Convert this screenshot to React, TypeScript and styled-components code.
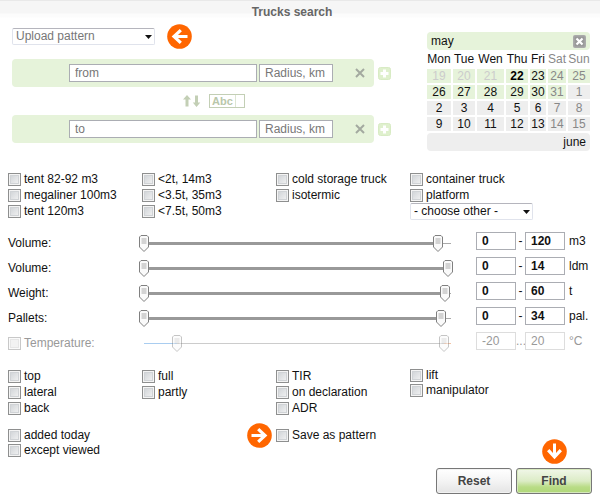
import React, { useState } from "react";
import styled, { createGlobalStyle, css } from "styled-components";

const GlobalStyle = createGlobalStyle`
  *, *::before, *::after { box-sizing: border-box; }
  body {
    margin: 0;
    background: #fff;
    color: #111;
    font: 12px/16px "Liberation Sans", Arial, sans-serif;
  }
  button, input, select { font: inherit; color: inherit; margin: 0; }
`;

const Header = styled.header`
  height: 24px;
  padding-right: 16px;
  border-top: 1px solid #e9e9e9;
  background: linear-gradient(#f6f6f6 12px, #fcfcfc 13px, #fcfcfc 16px, #fff 17px);
`;

const Title = styled.h1`
  margin: 0;
  font-size: 12px;
  line-height: 23px;
  text-align: center;
  color: #666;
`;

const Form = styled.form`
  padding: 0 8px;
`;

const TopArea = styled.div`
  display: flex;
  justify-content: space-between;
  align-items: flex-start;
  padding: 0 2px 0 4px;
`;

const Route = styled.div`
  width: 379px;
`;

const PatternRow = styled.div`
  display: flex;
  align-items: center;
  gap: 12px;
  height: 25px;
  margin-bottom: 10px;
`;

const SelectBox = styled.span<{ $width: number }>`
  position: relative;
  display: inline-flex;
  width: ${(p) => p.$width}px;
`;

const Select = styled.select<{ $muted?: boolean }>`
  appearance: none;
  width: 100%;
  height: 17px;
  padding: 0 16px 0 3px;
  border: 1px solid #e0e3ec;
  border-top-color: #b5b5bd;
  border-radius: 2px;
  background: #fff;
  line-height: 15px;
  color: ${(p) => (p.$muted ? "#777" : "#111")};
`;

const Caret = styled.svg`
  position: absolute;
  right: 3px;
  top: 7px;
  pointer-events: none;
`;

const PointRow = styled.div`
  display: flex;
  align-items: center;
  gap: 4px;
`;

const PointBar = styled.div`
  flex: 1;
  min-width: 0;
  display: flex;
  align-items: center;
  gap: 2px;
  height: 28px;
  padding: 0 8px 0 57px;
  border-radius: 4px;
  background: #e6f3da;
`;

const PlaceInput = styled.input`
  flex: 1 1 180px;
  min-width: 0;
  height: 18px;
  padding: 0 5px;
  border: 1px solid #abadb3;
  background: #fff;
  &::placeholder { color: #777; opacity: 1; }
`;

const RadiusInput = styled(PlaceInput)`
  flex: 0 0 74px;
`;

const IconButton = styled.button`
  display: flex;
  flex: none;
  align-items: center;
  justify-content: center;
  padding: 0;
  border: 0;
  background: none;
`;

const RemoveButton = styled(IconButton)`
  width: 12px;
  height: 14px;
  margin-left: 19px;
`;

const SwapRow = styled.div`
  display: flex;
  align-items: center;
  gap: 8px;
  height: 28px;
  padding-left: 171px;
`;

const AbcButton = styled.button`
  width: 36px;
  height: 14px;
  padding: 0 2px;
  border: 1px solid #c3cfb5;
  background: #fff;
  color: #b9c7aa;
  font-size: 11px;
  font-weight: bold;
  line-height: 12px;
  text-align: left;
`;

const AbcCursor = styled.span`
  padding-right: 2px;
  border-right: 1px solid #dde6d3;
`;

const Calendar = styled.section`
  width: 163px;
  margin-top: 8px;
`;

const MonthBar = styled.div<{ $next?: boolean }>`
  display: flex;
  align-items: center;
  justify-content: ${(p) => (p.$next ? "flex-end" : "space-between")};
  height: 18px;
  padding: 0 4px;
  border-radius: 4px;
  background: ${(p) => (p.$next ? "#eee" : "#e6f3da")};
`;

const Days = styled.table`
  table-layout: fixed;
  border-collapse: separate;
  border-spacing: 2px;
  margin: 0 -2px;
  width: calc(100% + 4px);
`;

const DayCol = styled.col<{ $w: number }>`
  width: ${(p) => p.$w}px;
`;

const WeekDay = styled.th<{ $weekend?: boolean }>`
  padding: 0;
  font-weight: normal;
  line-height: 15px;
  white-space: nowrap;
  color: ${(p) => (p.$weekend ? "#888" : "#111")};
`;

const WeekDayText = styled.span`
  display: flex;
  justify-content: center;
`;

type Tone = "past" | "today" | "work" | "weekend";
const toneColor: Record<Tone, string> = {
  past: "#ccc",
  today: "#000",
  work: "#111",
  weekend: "#888",
};

const Day = styled.td<{ $tone: Tone; $near: boolean }>`
  height: 14px;
  padding: 0;
  line-height: 14px;
  text-align: center;
  background: ${(p) => (p.$near ? "#e6f3da" : "#eee")};
  color: ${(p) => toneColor[p.$tone]};
  font-weight: ${(p) => (p.$tone === "today" ? "bold" : "normal")};
`;

const Columns = styled.div<{ $top: number }>`
  display: grid;
  grid-template-columns: 134fr 134fr 134fr 182fr;
  align-items: start;
  margin-top: ${(p) => p.$top}px;
`;

const Stack = styled.div<{ $tight?: boolean }>`
  display: grid;
  grid-auto-rows: ${(p) => (p.$tight ? "15px" : "16px")};
  justify-items: start;
`;

const CheckLabel = styled.label<{ $off?: boolean }>`
  position: relative;
  display: flex;
  align-items: center;
  gap: 3px;
  line-height: 15px;
  white-space: nowrap;
  color: ${(p) => (p.$off ? "#999" : "#111")};
`;

const CheckBox = styled.input`
  appearance: none;
  width: 13px;
  height: 13px;
  border: 1px solid #8e8f8f;
  background: linear-gradient(135deg, #cbcfd3, #f6f6f6);
  box-shadow: inset 0 0 0 1px #f4f4f4, inset 0 0 0 2px #d0d3d6;
  &:checked { background: #555; }
  &:disabled {
    border-color: #c8c8c8;
    background: #f2f2f2;
    box-shadow: inset 0 0 0 1px #fafafa, inset 0 0 0 2px #e6e6e6;
  }
`;

const Pointer = styled.span`
  position: absolute;
  right: 100%;
  margin-right: 4px;
  display: flex;
`;

const Sliders = styled.div`
  display: grid;
  grid-auto-rows: 25px;
  margin-top: 9px;
`;

const SliderRow = styled.div<{ $off?: boolean }>`
  display: flex;
  align-items: center;
  color: ${(p) => (p.$off ? "#999" : "#111")};
`;

const SliderName = styled.div`
  width: 131px;
  padding-top: 5px;
`;

const Track = styled.div`
  position: relative;
  flex: 1;
  height: 18px;
  margin-top: 5px;
  padding: 0 5px;
  display: flex;
  align-items: center;
`;

const Line = styled.div<{ $kind: "before" | "range" | "after"; $off?: boolean }>`
  ${(p) =>
    p.$kind === "range"
      ? css`height: ${p.$off ? 1 : 3}px; background: ${p.$off ? "#ccc" : "#999"};`
      : p.$kind === "before"
        ? css`height: 1px; background: ${p.$off ? "#a9cdf0" : "#999"};`
        : css`height: 1px; background: ${p.$off ? "#f3c3a5" : "#aaa"};`}
`;

const thumbImage = `url("data:image/svg+xml,%3Csvg xmlns='http://www.w3.org/2000/svg' width='10' height='17'%3E%3Cpath d='M2 .5H8L9.500 2V12L5 16.500L.5 12V2Z' fill='%23fafafa' stroke='%23808080'/%3E%3Cpath d='M2.500 3H7.500V9H2.500Z' fill='%23d3d3d3'/%3E%3C/svg%3E")`;

const Range = styled.input`
  position: absolute;
  inset: 0;
  appearance: none;
  width: 100%;
  height: 18px;
  background: none;
  pointer-events: none;
  &::-webkit-slider-thumb {
    appearance: none;
    width: 10px;
    height: 17px;
    border: 0;
    background: ${thumbImage} no-repeat;
    pointer-events: auto;
  }
  &:disabled { opacity: 0.45; }
`;

const Values = styled.div`
  display: flex;
  align-items: center;
  width: 116px;
  margin-left: 20px;
`;

const NumberInput = styled.input`
  width: 40px;
  height: 18px;
  padding: 0 5px;
  border: 1px solid #abadb3;
  background: #fff;
  font-weight: bold;
  &:disabled {
    border-color: #ddd;
    background: #fff;
    font-weight: normal;
    color: #999;
  }
`;

const Dash = styled.span`
  width: 9px;
  text-align: center;
`;

const Unit = styled.span`
  margin-left: 4px;
`;

const Actions = styled.div`
  display: grid;
  grid-template-columns: 76px 76px;
  justify-content: end;
  justify-items: center;
  gap: 4px;
  padding-top: 11px;
`;

const Hint = styled.span`
  grid-column: 2;
  display: flex;
`;

const ActionButton = styled.button<{ $primary?: boolean }>`
  width: 100%;
  height: 26px;
  padding: 0;
  border: 1px solid #777;
  border-radius: 3px;
  background: ${(p) =>
    p.$primary
      ? "linear-gradient(#f1f7e9, #dcecc6 50%, #b9dc86 75%, #b0d878)"
      : "linear-gradient(#fff, #f4f4f4 50%, #e4e4e4)"};
  box-shadow: inset 0 0 0 1px ${(p) => (p.$primary ? "#d6e8bd" : "#f2f2f2")};
  color: #444;
  font-weight: bold;
`;

function CircleArrow({ turn = 0 }: { turn?: number }) {
  return (
    <svg width="25" height="25" viewBox="0 0 25 25" aria-hidden="true">
      <circle cx="12.500" cy="12.500" r="12.300" fill="#ff6600" />
      <g transform={`rotate(${turn} 12.500 12.500)`} fill="none" stroke="#fff" strokeWidth="3">
        <path d="M7 12.500H20.500" />
        <path d="M13.800 6.200L7 12.500L13.800 18.800" strokeWidth="3.200" />
      </g>
    </svg>
  );
}

function DropDown({ width, label, muted }: { width: number; label: string; muted?: boolean }) {
  return (
    <SelectBox $width={width}>
      <Select $muted={muted} aria-label={label}>
        <option>{label}</option>
      </Select>
      <Caret width="7" height="4" viewBox="0 0 7 4">
        <path d="M0 0H7L3.500 4Z" fill="#111" />
      </Caret>
    </SelectBox>
  );
}

function Point({ name }: { name: string }) {
  return (
    <PointRow>
      <PointBar>
        <PlaceInput placeholder={name} aria-label={name} />
        <RadiusInput placeholder="Radius, km" aria-label={`Radius ${name}, km`} />
        <RemoveButton type="button" aria-label={`Remove ${name}`}>
          <svg width="10" height="10" viewBox="0 0 10 10">
            <path d="M1 1L9 9M9 1L1 9" stroke="#a3a9a0" strokeWidth="2" />
          </svg>
        </RemoveButton>
      </PointBar>
      <IconButton type="button" aria-label={`Add ${name}`}>
        <svg width="13" height="13" viewBox="0 0 13 13">
          <rect x="0.500" y="0.500" width="12" height="12" rx="2" fill="#dff0cd" stroke="#d8ebc4" />
          <path d="M6.500 2.500V10.500M2.500 6.500H10.500" stroke="#fff" strokeWidth="3" />
        </svg>
      </IconButton>
    </PointRow>
  );
}

const weekDays = ["Mon", "Tue", "Wen", "Thu", "Fri", "Sat", "Sun"];
const dayWidths = [24, 22, 27, 22, 16, 18, 22];
const weeks = [
  [19, 20, 21, 22, 23, 24, 25],
  [26, 27, 28, 29, 30, 31, 1],
  [2, 3, 4, 5, 6, 7, 8],
  [9, 10, 11, 12, 13, 14, 15],
];

function dayTone(week: number, day: number): Tone {
  if (week === 0 && day < 3) return "past";
  if (week === 0 && day === 3) return "today";
  return day > 4 ? "weekend" : "work";
}

function MonthPicker() {
  return (
    <Calendar aria-label="Loading date">
      <MonthBar>
        may
        <IconButton type="button" aria-label="Close calendar">
          <svg width="13" height="13" viewBox="0 0 13 13">
            <rect width="13" height="13" rx="2" fill="#aaa" />
            <rect x="1.500" y="1.500" width="10" height="10" fill="#999" />
            <path d="M3.500 3.500L9.500 9.500M9.500 3.500L3.500 9.500" stroke="#fff" strokeWidth="2.200" />
          </svg>
        </IconButton>
      </MonthBar>
      <Days>
        <colgroup>
          {dayWidths.map((w, i) => (
            <DayCol key={i} $w={w} />
          ))}
        </colgroup>
        <thead>
          <tr>
            {weekDays.map((d, i) => (
              <WeekDay key={d} $weekend={i > 4}>
                <WeekDayText>{d}</WeekDayText>
              </WeekDay>
            ))}
          </tr>
        </thead>
        <tbody>
          {weeks.map((week, w) => (
            <tr key={w}>
              {week.map((n, d) => (
                <Day key={n} $tone={dayTone(w, d)} $near={w === 0 || (w === 1 && d < 6)}>
                  {n}
                </Day>
              ))}
            </tr>
          ))}
        </tbody>
      </Days>
      <MonthBar $next>june</MonthBar>
    </Calendar>
  );
}

function Check({ label, off, pointer }: { label: string; off?: boolean; pointer?: boolean }) {
  return (
    <CheckLabel $off={off}>
      {pointer && (
        <Pointer>
          <CircleArrow turn={180} />
        </Pointer>
      )}
      <CheckBox type="checkbox" disabled={off} />
      {label}
    </CheckLabel>
  );
}

function CheckStack({ labels, tight }: { labels: string[]; tight?: boolean }) {
  return (
    <Stack $tight={tight}>
      {labels.map((l) => (
        <Check key={l} label={l} />
      ))}
    </Stack>
  );
}

type SliderSpec = {
  name: string;
  unit: string;
  min: number;
  max: number;
  low: number;
  high: number;
  off?: boolean;
};

const sliders: SliderSpec[] = [
  { name: "Volume:", unit: "m3", min: 0, max: 125.5, low: 0, high: 120 },
  { name: "Volume:", unit: "ldm", min: 0, max: 14.15, low: 0, high: 14 },
  { name: "Weight:", unit: "t", min: 0, max: 61.2, low: 0, high: 60 },
  { name: "Pallets:", unit: "pal.", min: 0, max: 35.1, low: 0, high: 34 },
  { name: "Temperature:", unit: "°C", min: -25, max: 21.1, low: -20, high: 20, off: true },
];

function RangeRow({ spec }: { spec: SliderSpec }) {
  const { name, unit, min, max, off } = spec;
  const [low, setLow] = useState(spec.low);
  const [high, setHigh] = useState(spec.high);
  const share = (length: number) => `${(length / (max - min)) * 100}%`;
  const changeLow = (e: React.ChangeEvent<HTMLInputElement>) =>
    setLow(Math.min(Math.round(Number(e.target.value) || 0), high));
  const changeHigh = (e: React.ChangeEvent<HTMLInputElement>) =>
    setHigh(Math.max(Math.round(Number(e.target.value) || 0), low));
  const range = { type: "range", min, max, step: "any", disabled: off };
  return (
    <SliderRow $off={off}>
      <SliderName>{off ? <Check label={name} off /> : name}</SliderName>
      <Track>
        <Line $kind="before" $off={off} style={{ width: share(low - min) }} />
        <Line $kind="range" $off={off} style={{ width: share(high - low) }} />
        <Line $kind="after" $off={off} style={{ width: share(max - high) }} />
        <Range {...range} value={low} onChange={changeLow} aria-label={`${name} from, ${unit}`} />
        <Range {...range} value={high} onChange={changeHigh} aria-label={`${name} to, ${unit}`} />
      </Track>
      <Values>
        <NumberInput value={low} onChange={changeLow} disabled={off} aria-label={`${name} minimum, ${unit}`} />
        <Dash>{off ? "..." : "-"}</Dash>
        <NumberInput value={high} onChange={changeHigh} disabled={off} aria-label={`${name} maximum, ${unit}`} />
        <Unit>{unit}</Unit>
      </Values>
    </SliderRow>
  );
}

export default function App() {
  return (
    <>
      <GlobalStyle />
      <Header>
        <Title>Trucks search</Title>
      </Header>
      <Form onSubmit={(e) => e.preventDefault()}>
        <TopArea>
          <Route>
            <PatternRow>
              <DropDown width={143} label="Upload pattern" muted />
              <CircleArrow />
            </PatternRow>
            <Point name="from" />
            <SwapRow>
              <IconButton type="button" aria-label="Swap places">
                <svg width="18" height="12" viewBox="0 0 18 12" fill="#c3cfb5">
                  <path d="M4 0L8 4.500H5.500V11.500H2.500V4.500H0Z" />
                  <path d="M13.500 12L9.800 7.500H12V0.500H15V7.500H17.300Z" />
                </svg>
              </IconButton>
              <AbcButton type="button">
                <AbcCursor>Abc</AbcCursor>
              </AbcButton>
            </SwapRow>
            <Point name="to" />
          </Route>
          <MonthPicker />
        </TopArea>

        <Columns $top={20}>
          <CheckStack labels={["tent 82-92 m3", "megaliner 100m3", "tent 120m3"]} />
          <CheckStack labels={["<2t, 14m3", "<3.5t, 35m3", "<7.5t, 50m3"]} />
          <CheckStack labels={["cold storage truck", "isotermic"]} />
          <Stack>
            <Check label="container truck" />
            <Check label="platform" />
            <DropDown width={123} label="- choose other -" />
          </Stack>
        </Columns>

        <Sliders>
          {sliders.map((s) => (
            <RangeRow key={s.unit} spec={s} />
          ))}
        </Sliders>

        <Columns $top={15}>
          <CheckStack labels={["top", "lateral", "back"]} />
          <CheckStack labels={["full", "partly"]} />
          <CheckStack labels={["TIR", "on declaration", "ADR"]} />
          <CheckStack tight labels={["lift", "manipulator"]} />
        </Columns>

        <Columns $top={12}>
          <CheckStack tight labels={["added today", "except viewed"]} />
          <span />
          <Stack $tight>
            <Check label="Save as pattern" pointer />
          </Stack>
          <Actions>
            <Hint>
              <CircleArrow turn={-90} />
            </Hint>
            <ActionButton type="reset">Reset</ActionButton>
            <ActionButton type="submit" $primary>
              Find
            </ActionButton>
          </Actions>
        </Columns>
      </Form>
    </>
  );
}
